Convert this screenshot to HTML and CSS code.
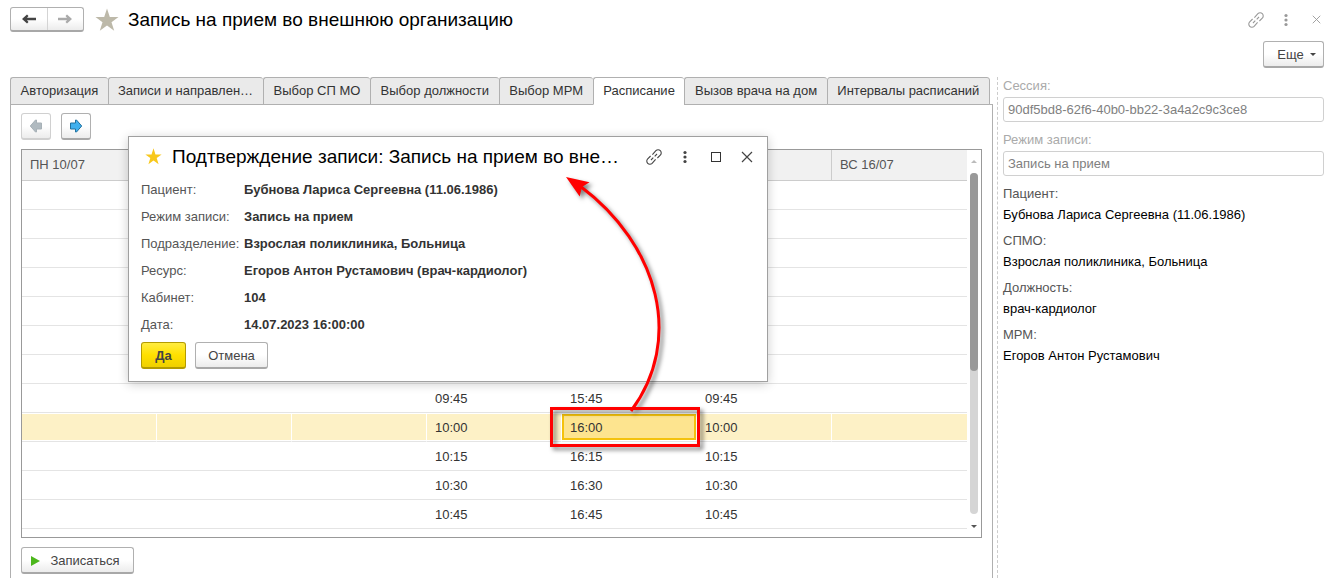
FILE: index.html
```html
<!DOCTYPE html>
<html lang="ru">
<head>
<meta charset="utf-8">
<title>Запись на прием во внешнюю организацию</title>
<link rel="stylesheet" href="styles.css">
</head>
<body>
<svg class="defs" aria-hidden="true">
  <symbol id="link" viewBox="0 0 16 16">
    <g fill="none" stroke="currentColor" stroke-width="1.1">
      <path d="M6.400 5.600 9.9 1.700a3.100 3.100 0 0 1 4.400 0 3.100 3.100 0 0 1 0 4.400L11.400 9"/>
      <path d="M9.600 10.400 6.100 14.300a3.100 3.100 0 0 1-4.400 0 3.100 3.100 0 0 1 0-4.400L4.600 7"/>
      <path d="M5 11 7.300 8.700M8.700 7.300 11 5"/>
    </g>
  </symbol>
  <symbol id="dots" viewBox="0 0 4 14">
    <g fill="currentColor"><circle cx="2" cy="2.5" r="1.6"/><circle cx="2" cy="7" r="1.6"/><circle cx="2" cy="11.5" r="1.6"/></g>
  </symbol>
  <symbol id="cross" viewBox="0 0 12 12">
    <path fill="none" stroke="currentColor" stroke-width="1.2" d="M1 1 11 11M11 1 1 11"/>
  </symbol>
  <symbol id="star" viewBox="0 0 24 24">
    <path fill="currentColor" d="M12 .5 14.8 9H23.5L16.5 14.2 19.2 22.8 12 17.5 4.8 22.8 7.5 14.2.5 9H9.2Z"/>
  </symbol>
  <symbol id="arrow" viewBox="0 0 14 10">
    <path fill="currentColor" d="M0 5 5 .5 6.500 2 5 3.700H14V6.300H5L6.500 8 5 9.500Z"/>
  </symbol>
  <symbol id="block-arrow" viewBox="0 0 14 14">
    <path d="M1.500 4H6.500V1H7.500L12.700 7 7.500 13H6.500V10H1.500Z"/>
  </symbol>
</svg>

<header class="header">
  <div class="nav">
    <button class="nav-btn" aria-label="Назад"><svg class="nav-icon"><use href="#arrow"/></svg></button>
    <button class="nav-btn nav-next" aria-label="Вперед"><svg class="nav-icon flip"><use href="#arrow"/></svg></button>
  </div>
  <svg class="star-big"><use href="#star"/></svg>
  <h1 class="title">Запись на прием во внешнюю организацию</h1>
  <div class="window-tools">
    <button class="icon-btn" aria-label="Ссылка"><svg class="i16"><use href="#link"/></svg></button>
    <button class="icon-btn" aria-label="Меню"><svg class="i-dots"><use href="#dots"/></svg></button>
    <button class="icon-btn" aria-label="Закрыть"><svg class="i9"><use href="#cross"/></svg></button>
  </div>
</header>
<div class="command-bar"><button class="btn btn-more">Еще<span class="caret"></span></button></div>

<div class="layout">
  <main class="main">
    <nav class="tabs">
      <button class="tab">Авторизация</button>
      <button class="tab tab-clipped">Записи и направлен…</button>
      <button class="tab">Выбор СП МО</button>
      <button class="tab">Выбор должности</button>
      <button class="tab">Выбор МРМ</button>
      <button class="tab active">Расписание</button>
      <button class="tab">Вызов врача на дом</button>
      <button class="tab">Интервалы расписаний</button>
    </nav>
    <section class="panel">
      <div class="toolbar">
        <button class="btn btn-square prev" aria-label="Предыдущая неделя"><svg class="i14 flip"><use href="#block-arrow"/></svg></button>
        <button class="btn btn-square next" aria-label="Следующая неделя"><svg class="i14"><use href="#block-arrow"/></svg></button>
      </div>
      <div class="grid-box">
        <div class="grid-view">
          <table class="grid">
            <thead><tr><th>ПН 10/07</th><th></th><th></th><th></th><th></th><th></th><th>ВС 16/07</th></tr></thead>
            <tbody>
              <tr><td></td><td></td><td></td><td></td><td></td><td></td><td></td></tr>
              <tr><td></td><td></td><td></td><td></td><td></td><td></td><td></td></tr>
              <tr><td></td><td></td><td></td><td></td><td></td><td></td><td></td></tr>
              <tr><td></td><td></td><td></td><td></td><td></td><td></td><td></td></tr>
              <tr><td></td><td></td><td></td><td></td><td></td><td></td><td></td></tr>
              <tr><td></td><td></td><td></td><td></td><td></td><td></td><td></td></tr>
              <tr><td></td><td></td><td></td><td></td><td></td><td></td><td></td></tr>
              <tr><td></td><td></td><td></td><td>09:45</td><td>15:45</td><td>09:45</td><td></td></tr>
              <tr class="selected"><td></td><td></td><td></td><td>10:00</td><td class="current">16:00</td><td>10:00</td><td></td></tr>
              <tr><td></td><td></td><td></td><td>10:15</td><td>16:15</td><td>10:15</td><td></td></tr>
              <tr><td></td><td></td><td></td><td>10:30</td><td>16:30</td><td>10:30</td><td></td></tr>
              <tr><td></td><td></td><td></td><td>10:45</td><td>16:45</td><td>10:45</td><td></td></tr>
            </tbody>
          </table>
        </div>
        <div class="scroll">
          <span class="scroll-up"></span>
          <div class="track"><div class="thumb"></div></div>
          <span class="scroll-down"></span>
        </div>
      </div>
      <button class="btn btn-book"><span class="play"></span>Записаться</button>
    </section>
  </main>

  <aside class="side">
    <div class="field">
      <label for="session">Сессия:</label>
      <input id="session" value="90df5bd8-62f6-40b0-bb22-3a4a2c9c3ce8" readonly>
    </div>
    <div class="field">
      <label for="mode">Режим записи:</label>
      <input id="mode" value="Запись на прием" readonly>
    </div>
    <dl class="info">
      <dt>Пациент:</dt><dd>Бубнова Лариса Сергеевна (11.06.1986)</dd>
      <dt>СПМО:</dt><dd>Взрослая поликлиника, Больница</dd>
      <dt>Должность:</dt><dd>врач-кардиолог</dd>
      <dt>МРМ:</dt><dd>Егоров Антон Рустамович</dd>
    </dl>
  </aside>
</div>

<div class="dialog" role="dialog" aria-labelledby="dialog-title">
  <div class="dialog-head">
    <svg class="star-small"><use href="#star"/></svg>
    <h2 class="title" id="dialog-title">Подтверждение записи: Запись на прием во вне…</h2>
    <div class="dialog-tools">
      <button class="icon-btn" aria-label="Ссылка"><svg class="i16"><use href="#link"/></svg></button>
      <button class="icon-btn" aria-label="Меню"><svg class="i-dots"><use href="#dots"/></svg></button>
      <button class="icon-btn" aria-label="Развернуть"><span class="maximize"></span></button>
      <button class="icon-btn" aria-label="Закрыть"><svg class="i12"><use href="#cross"/></svg></button>
    </div>
  </div>
  <dl class="details">
    <dt>Пациент:</dt><dd>Бубнова Лариса Сергеевна (11.06.1986)</dd>
    <dt>Режим записи:</dt><dd>Запись на прием</dd>
    <dt>Подразделение:</dt><dd>Взрослая поликлиника, Больница</dd>
    <dt>Ресурс:</dt><dd>Егоров Антон Рустамович (врач-кардиолог)</dd>
    <dt>Кабинет:</dt><dd>104</dd>
    <dt>Дата:</dt><dd>14.07.2023 16:00:00</dd>
  </dl>
  <div class="actions">
    <button class="btn btn-yes">Да</button>
    <button class="btn btn-cancel">Отмена</button>
  </div>
</div>

<svg class="callout" viewBox="540 170 170 290" aria-hidden="true">
  <rect x="551.5" y="408.5" width="147" height="37" fill="none" stroke="#f00" stroke-width="3"/>
  <path d="M631 411C684 340 659 245 580 186" fill="none" stroke="#f00" stroke-width="3"/>
  <path d="M566 177 589.5 182.3 582 187 579.7 196.5Z" fill="#f00"/>
</svg>
</body>
</html>
```

FILE: styles.css
```css
* { box-sizing: border-box; }

body {
  margin: 0;
  height: 100vh;
  display: flex;
  flex-direction: column;
  position: relative;
  overflow: hidden;
  background: #fff;
  color: #333;
  font: 13px/16px "Liberation Sans", Arial, sans-serif;
}

button, input { font: inherit; color: inherit; }
button { padding: 0; border: 0; background: none; }
svg { display: block; flex: none; }
dl, dd, h1, h2 { margin: 0; }

.defs { position: absolute; width: 0; height: 0; }
.i16 { width: 16px; height: 16px; }
.i14 { width: 14px; height: 14px; }
.i12 { width: 12px; height: 12px; }
.i9 { width: 9px; height: 9px; }
.i-dots { width: 4px; height: 14px; }
.flip { transform: scaleX(-1); }

.title {
  color: #000;
  font-size: 19px;
  line-height: 24px;
  font-weight: 400;
  white-space: nowrap;
}

.icon-btn {
  width: 30px;
  height: 24px;
  display: flex;
  align-items: center;
  justify-content: center;
}

.btn {
  height: 27px;
  display: flex;
  align-items: center;
  justify-content: center;
  padding-top: 1px;
  border: 1px solid #b0b0b0;
  border-bottom: 2px solid #a8a8a8;
  border-radius: 3px;
  background: linear-gradient(#fff 50%, #ececec);
  color: #444;
}

/* Window header */
.header {
  height: 41px;
  display: flex;
  align-items: center;
  padding: 0 2px 2px 10px;
}
.nav {
  display: flex;
  width: 74px;
  height: 25px;
  border: 1px solid #b0b0b0;
  border-bottom: 2px solid #a8a8a8;
  border-radius: 3px;
  background: linear-gradient(#fff 50%, #ececec);
}
.nav-btn {
  flex: 1;
  display: flex;
  align-items: center;
  justify-content: center;
  color: #444;
}
.nav-next { border-left: 1px solid #d4d4d4; color: #aaa; }
.nav-icon { width: 14px; height: 10px; }
.star-big { width: 24px; height: 24px; margin: 0 9px 0 11px; color: #bdb9a9; }
.window-tools { display: flex; margin-left: auto; color: #999; }

.command-bar { display: flex; justify-content: flex-end; padding: 0 9px 9px; }
.btn-more { width: 61px; gap: 6px; padding-left: 6px; }
.caret {
  border: 3px solid transparent;
  border-top-color: #444;
  border-bottom: 0;
}

.layout { flex: 1; min-height: 0; display: flex; }

/* Tabs and schedule */
.main {
  flex: 1;
  min-width: 0;
  display: flex;
  flex-direction: column;
  padding-left: 10px;
}
.tabs { display: flex; margin: 0 3px -1px 0; z-index: 1; }
.tab {
  flex: 1 0 auto;
  height: 28px;
  padding: 0 9px;
  border: 1px solid #b0b0b0;
  border-right: 0;
  border-radius: 3px 3px 0 0;
  background: #eaeaea;
  white-space: nowrap;
}
.tab:last-child { border-right: 1px solid #b0b0b0; }
.tab-clipped { flex-grow: 0; width: 155px; padding-right: 10px; }
.tab.active { border-bottom-color: #fff; background: #fff; }

.panel {
  flex: 1;
  min-height: 0;
  display: flex;
  flex-direction: column;
  align-items: flex-start;
  padding: 8px 10px 4px;
  border: 1px solid #b0b0b0;
  border-bottom: 0;
}
.toolbar { display: flex; gap: 10px; margin-bottom: 9px; }
.btn-square { width: 30px; padding-top: 0; stroke: #21719f; fill: #3fb0ee; }
.prev { border-color: #d0d0d0; fill: #b0bac0; stroke: #a7b1b7; }

.grid-box {
  flex: 1;
  min-height: 0;
  align-self: stretch;
  display: flex;
  overflow: hidden;
  margin-bottom: 9px;
  border: 1px solid #999;
}
.grid-view { flex: 1; min-width: 0; }
.grid {
  width: 100%;
  table-layout: fixed;
  border-collapse: separate;
  border-spacing: 0;
}
.grid th, .grid td {
  height: 29px;
  padding: 2px 8px 0;
  border-bottom: 1px solid #e4e4e4;
  text-align: left;
  font-weight: 400;
}
.grid th {
  height: 31px;
  padding: 0 8px;
  border-right: 1px solid #ccc;
  border-bottom-color: #ccc;
  background: #f1f1f1;
  color: #555;
}
.grid th:last-child { border-right: 0; }
.grid .selected td {
  border-right: 1px solid #fff;
  background: #fdf1c6;
  box-shadow: inset 0 1px #fff, inset 0 -1px #fff;
}
.grid .selected td:last-child { border-right: 0; }
.grid .selected .current {
  background: #fde48f;
  box-shadow: inset 0 1px #fff, inset 0 -1px #fff, inset 0 3px #f4c20d, inset 0 -3px #f4c20d, inset 2px 0 #f4c20d, inset -2px 0 #f4c20d;
}

.scroll {
  width: 14px;
  display: flex;
  flex-direction: column;
  align-items: center;
  padding: 10px 0 9px;
}
.scroll-up { border: 3px solid transparent; border-top: 0; border-bottom-color: #bbb; }
.scroll-down { border: 3px solid transparent; border-bottom: 0; border-top-color: #555; }
.track {
  flex: 1;
  width: 8px;
  margin: 10px 0 11px;
  border-radius: 4px;
  background: #d5d5d5;
}
.thumb { height: 58%; border-radius: 4px; background: #999; }

.btn-book { width: 113px; gap: 10px; padding-right: 4px; }
.play {
  border: 5px solid transparent;
  border-left: 9px solid #4cb71c;
  border-right: 0;
}

/* Session details */
.side {
  width: 336px;
  margin-left: 4px;
  padding: 0 9px 0 5px;
  border-left: 1px dashed #ccc;
}
.field + .field { margin-top: 9px; }
.field label { display: block; line-height: 18px; padding-bottom: 2px; color: #aaa; }
.field input {
  display: block;
  width: 100%;
  height: 25px;
  padding: 0 4px;
  border: 1px solid #d0d0d0;
  border-radius: 3px;
  background: #fff;
  color: #808080;
}
.info { line-height: 21px; margin-top: 7px; }
.info dt { color: #555; }
.info dd { margin-bottom: 5px; color: #000; }

/* Confirmation window */
.dialog {
  position: absolute;
  left: 128px;
  top: 136px;
  width: 640px;
  padding: 0 12px 12px;
  border: 1px solid #a0a0a0;
  background: #fff;
  box-shadow: 0 2px 10px rgba(0, 0, 0, .2);
}
.dialog-head { height: 39px; display: flex; align-items: center; }
.star-small { width: 17px; height: 17px; margin: 0 10px 0 4px; color: #f8c81c; }
.dialog-tools { display: flex; margin-left: auto; margin-right: -7px; color: #444; }
.dialog-tools .icon-btn { width: 31px; }
.maximize { width: 10px; height: 10px; border: 1px solid #333; }
.details {
  display: grid;
  grid-template-columns: 103px 1fr;
  line-height: 27px;
  margin-bottom: 4px;
}
.details dt { color: #555; white-space: nowrap; }
.details dd { font-weight: 700; }
.actions { display: flex; gap: 9px; }
.btn-yes {
  width: 45px;
  border-color: #b39b00;
  background: linear-gradient(#ffec40, #ffe000 50%, #efd000);
  font-weight: 700;
}
.btn-cancel { width: 73px; }

.callout {
  position: absolute;
  left: 540px;
  top: 170px;
  width: 170px;
  height: 290px;
  pointer-events: none;
  filter: drop-shadow(3px 3px 2px rgba(0, 0, 0, .5));
}
```
